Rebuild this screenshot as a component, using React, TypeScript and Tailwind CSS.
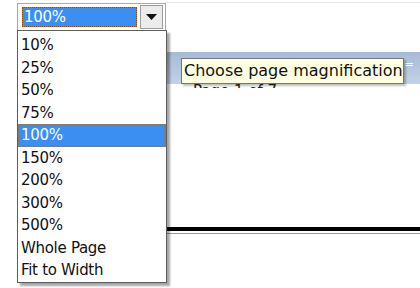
const options = ['10%', '25%', '50%', '75%', '100%', '150%', '200%', '300%', '500%', 'Whole Page', 'Fit to Width'];

export default function App() {
  const selected = '100%';

  return (
    <div className="relative w-[420px] h-[288px] overflow-hidden bg-white font-['DejaVu_Sans',sans-serif] text-black">
      {/* page behind the popup */}
      <div className="flex flex-col">
        <div className="ml-[165px] mt-[2px] h-px bg-[#e6e6e6]" />
        <div className="ml-[165px] mt-[49px] h-[32px] flex items-start justify-end bg-gradient-to-b from-[#a6bbd6] to-[#c3d2e5] pr-[6px] pt-[6px]">
          <span className="text-[12px] leading-none text-white">=</span>
        </div>
        <div className="ml-[193px] h-[4px] overflow-hidden">
          <div className="text-[15px] leading-[15px] text-[#222]">Page 1 of 7</div>
        </div>
        <div className="ml-[166px] mt-[139px] h-[4px] bg-black" />
        <div className="ml-[166px] mt-[2px] h-px bg-[#9a9a9a]" />
      </div>

      {/* combo box */}
      <div className="absolute left-[17px] top-[3px] w-[149px] h-[28px] flex items-center gap-[3px] border border-[#a9a9a9] bg-white pl-[4px] pr-[1px]">
        <div className="h-[20px] w-[115px] flex items-center border border-dotted border-[#9a4a00] bg-[#3b8ff3] pl-px text-[15px] tracking-[-0.3px] leading-none text-white">
          {selected}
        </div>
        <div className="h-[24px] w-[23px] flex items-center justify-center border border-[#9c9c9c] bg-[#ececec]">
          <svg width="11" height="6" viewBox="0 0 11 6">
            <path d="M0 0h11L5.5 6z" fill="#111" />
          </svg>
        </div>
      </div>

      {/* dropdown list */}
      <div className="absolute left-[17px] top-[30px] w-[150px] h-[253px] border border-[#5e5e5e] bg-white pt-[3px] shadow-[3px_3px_2px_rgba(0,0,0,0.35)]">
        {options.map((o) =>
          o === selected ? (
            <div
              key={o}
              className="h-[22.5px] flex items-center border-2 border-[#7d7d7d] bg-[#3b8ff3] pl-[1px] text-[15px] tracking-[-0.3px] text-white"
            >
              {o}
            </div>
          ) : (
            <div key={o} className="h-[22.5px] flex items-center pl-[3px] text-[15px] tracking-[-0.3px] text-[#111]">
              {o}
            </div>
          ),
        )}
      </div>

      {/* tooltip */}
      <div className="absolute left-[181px] top-[58px] w-[223px] h-[26px] flex items-center border border-[#767676] bg-[#ffffe1] pl-[2px] text-[16px] leading-none text-[#111] shadow-[2px_2px_2px_rgba(0,0,0,0.25)]">
        Choose page magnification
      </div>
    </div>
  );
}
